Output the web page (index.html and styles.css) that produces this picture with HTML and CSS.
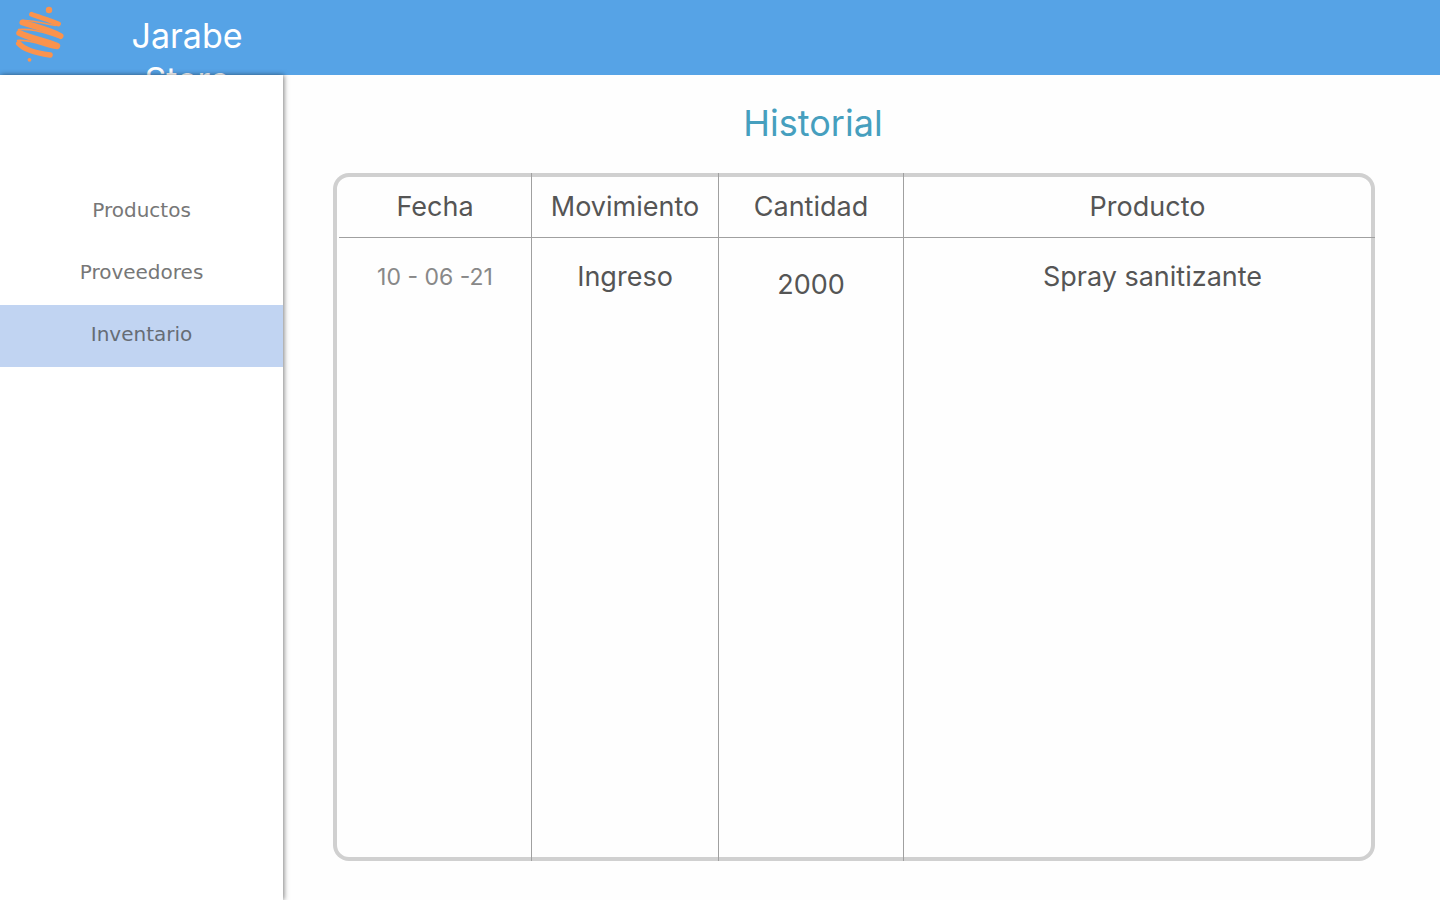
FILE: index.html
```html
<!DOCTYPE html>
<html lang="es">
<head>
<meta charset="utf-8">
<title>Jarabe Store</title>
<link rel="stylesheet" href="styles.css">
</head>
<body>
<header class="topbar">
  <svg class="logo" viewBox="0 0 56 64" aria-hidden="true">
    <g fill="none" stroke="#fb934d" stroke-linecap="round" stroke-linejoin="round">
      <path stroke-width="4.800" d="M19.500 10.300C28 13.500 38 16 46.500 20"/>
      <path stroke-width="6" d="M10.500 18.500C21 22 38 26 48.500 32"/>
      <path stroke-width="6.400" d="M7.500 29C17 34 33 37 45 42"/>
      <path stroke-width="5.600" d="M6.800 39.500C13 46.500 27 49.500 38 51"/>
      <path stroke-width="1.600" d="M44 21.500C35 20.500 26 17 11 16.200M46 33C34 29.500 22 24.500 6.500 25.500M43 44C31 42 20 35.500 5.500 36.500"/>
    </g>
    <circle cx="37" cy="6" r="3.200" fill="#fb934d"/>
    <circle cx="17.500" cy="55.800" r="1.900" fill="#fb934d"/>
  </svg>
  <div class="brand">Jarabe Store</div>
</header>
<div class="layout">
  <nav class="sidebar">
    <a class="nav-link" href="#">Productos</a>
    <a class="nav-link" href="#">Proveedores</a>
    <a class="nav-link active" href="#" aria-current="page">Inventario</a>
  </nav>
  <main class="content">
    <h1 class="title">Historial</h1>
    <div class="frame">
      <table class="history">
        <colgroup><col class="col-date"><col class="col-move"><col class="col-amount"><col></colgroup>
        <thead>
          <tr><th>Fecha</th><th>Movimiento</th><th>Cantidad</th><th class="product-head">Producto</th></tr>
        </thead>
        <tbody>
          <tr><td class="date">10 - 06 -21</td><td>Ingreso</td><td class="amount">2000</td><td class="product">Spray sanitizante</td></tr>
        </tbody>
      </table>
    </div>
  </main>
</div>
</body>
</html>
```
FILE: styles.css
```css
* { box-sizing: border-box; }
body {
  margin: 0;
  min-height: 100vh;
  display: flex;
  flex-direction: column;
  background: #fefefe;
  font-family: Inter, sans-serif;
  color: #555;
}
.topbar {
  height: 75px;
  flex: none;
  display: flex;
  align-items: flex-start;
  background: #56a3e6;
  color: #fff;
}
.logo { width: 56px; height: 64px; margin: 4px 0 0 12px; flex: none; }
.brand {
  width: 160px;
  margin: 14px 0 0 39px;
  font-size: 34px;
  line-height: 44px;
  text-align: center;
}
.layout { flex: 1; display: flex; }
.sidebar {
  position: relative;
  width: 283px;
  flex: none;
  padding-top: 106px;
  background: #fff;
  box-shadow: 1px 0 5px rgba(0, 0, 0, .5);
  clip-path: inset(-6px -10px 0 0);
}
.nav-link {
  display: block;
  height: 62px;
  padding-top: 17px;
  font: 20px/24px Verdana, "DejaVu Sans", sans-serif;
  text-align: center;
  text-decoration: none;
  color: #777;
}
.nav-link.active { background: #c1d4f2; color: #666c75; }
.content {
  flex: 1;
  min-width: 0;
  display: flex;
  flex-direction: column;
  padding: 26px 65px 39px 50px;
}
.title {
  margin: 0 82px 28px 0;
  font-size: 36px;
  line-height: 44px;
  font-weight: 400;
  text-align: center;
  color: #469fbe;
}
.frame {
  flex: 1;
  display: grid;
  padding-left: 6px;
  border-radius: 16px;
  box-shadow: inset 0 0 0 4px #d0d0d0;
}
.history {
  width: 100%;
  height: 100%;
  table-layout: fixed;
  border-collapse: separate;
  border-spacing: 0;
  font-size: 27px;
  line-height: 32px;
  text-align: center;
}
.col-date { width: 193px; }
.col-move { width: 187px; }
.col-amount { width: 185px; }
.history th, .history td { padding: 0; border-right: 1px solid #a0a0a0; }
.history th:last-child, .history td:last-child { border-right: 0; }
.history th {
  height: 65px;
  padding-top: 4px;
  font-weight: 400;
  border-bottom: 1px solid #a0a0a0;
}
.history td { vertical-align: top; padding-top: 23px; }
.history tbody tr { height: 100%; }
.history .date { font-size: 23px; color: #888; }
.history .amount { padding-top: 31px; }
.history .product-head { padding-left: 16px; }
.history .product { padding-left: 26px; }
```
